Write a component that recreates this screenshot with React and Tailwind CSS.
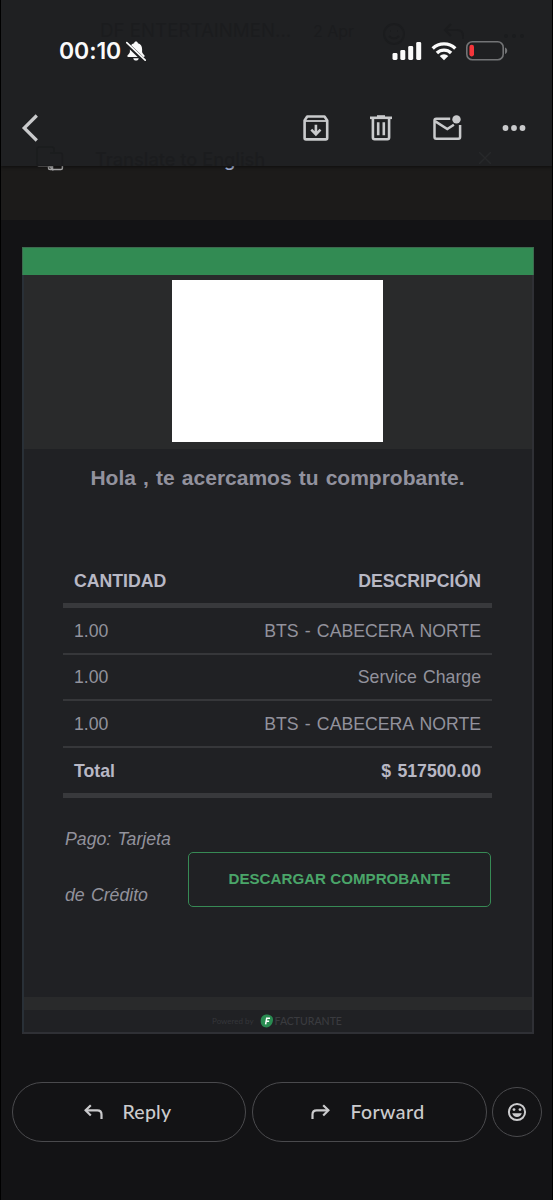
import React from 'react';

const rows = [
  { qty: '1.00', description: 'BTS - CABECERA NORTE' },
  { qty: '1.00', description: 'Service Charge' },
  { qty: '1.00', description: 'BTS - CABECERA NORTE' },
];

const BellOffIcon = () => (
  <svg width="20" height="20" viewBox="0 0 20 20" className="shrink-0">
    <path d="M10 .6c-1 0-1.700.7-1.900 1.600C5.400 3 3.900 5 3.900 8v2.700c0 1.300-1.300 2.300-2.300 3.600-.6.900-.2 1.700.8 1.700h15.200c1 0 1.400-.8.8-1.700-1-1.300-2.300-2.300-2.300-3.600V8c0-3-1.500-5-4.200-5.800C11.700 1.300 11 .6 10 .6z" fill="#fafafa" />
    <path d="M7.200 17.200h5.600c-.3 1.600-1.400 2.400-2.800 2.400s-2.500-.8-2.800-2.400z" fill="#fafafa" />
    <path d="M.2 2.200 18.600 20" stroke="#1f2022" strokeWidth="4" />
    <path d="M.8 1.600 19.200 19.200" stroke="#fafafa" strokeWidth="1.700" strokeLinecap="round" />
  </svg>
);

const SignalIcon = () => (
  <svg width="30" height="18" viewBox="0 0 30 18" fill="#fafafa">
    <rect x="0.500" y="11" width="5" height="7" rx="1.400" />
    <rect x="8.300" y="8" width="5" height="10" rx="1.400" />
    <rect x="16.200" y="4" width="5" height="14" rx="1.400" />
    <rect x="24.200" y="0" width="5" height="18" rx="1.400" />
  </svg>
);

const WifiIcon = () => (
  <svg width="26" height="19" viewBox="0 0 26 19" fill="none" stroke="#fafafa" strokeWidth="3.400">
    <path d="M1.700 6.500a16.200 16.200 0 0 1 22.600 0" />
    <path d="M5.900 11a10.200 10.200 0 0 1 14.200 0" />
    <path d="M13 18.200 8.700 14a6.200 6.200 0 0 1 8.600 0z" fill="#fafafa" stroke="none" />
  </svg>
);

const BatteryIcon = () => (
  <svg width="42" height="20" viewBox="0 0 42 20">
    <rect x="0.800" y="0.800" width="36.400" height="18" rx="5.500" fill="none" stroke="#737476" strokeWidth="1.600" />
    <rect x="3.400" y="3.800" width="4.600" height="11.600" rx="2.100" fill="#f5363b" />
    <path d="M39 6.500c1.400.4 2.200 1.600 2.200 3.200s-.8 2.800-2.200 3.200z" fill="#737476" />
  </svg>
);

const BackIcon = () => (
  <svg width="18" height="28" viewBox="0 0 18 28" fill="none" stroke="#c9cacc" strokeWidth="3.200">
    <path d="M15.800 1.500 3.200 14l12.600 12.500" />
  </svg>
);

const ArchiveIcon = () => (
  <svg width="26" height="26" viewBox="0 0 26 26" fill="none" stroke="#c9cacc" strokeWidth="2.600">
    <path d="M1.600 5.500 4.200 1.500h17.300l2.700 4V23q0 1.400-1.400 1.400H3Q1.600 24.400 1.600 23z" strokeLinejoin="round" />
    <path d="M2 6h22" strokeWidth="1.800" />
    <path d="M12.900 9.800v9M8.300 14.700l4.600 4.600 4.600-4.600" />
  </svg>
);

const TrashIcon = () => (
  <svg width="22" height="26" viewBox="0 0 22 26" fill="none" stroke="#c9cacc" strokeWidth="2.600">
    <path d="M0 2.800h22" />
    <path d="M7 1.200h8" strokeWidth="2" />
    <path d="M2.900 3v19.600q0 1.700 1.700 1.700h12.800q1.700 0 1.700-1.700V3" />
    <path d="M8.200 7.200v13M13.800 7.200v13" />
  </svg>
);

const UnreadIcon = () => (
  <svg width="29" height="26" viewBox="0 0 29 26" fill="none" stroke="#c9cacc" strokeWidth="2.500">
    <path d="M17.200 3.800H3.200Q1.500 3.800 1.500 5.500v16.500q0 1.700 1.700 1.700h22.200q1.700 0 1.700-1.700V10" />
    <path d="m2.300 6.400 12 7.600 6.600-4.200" />
    <circle cx="23.500" cy="4.400" r="4.200" fill="#c9cacc" stroke="none" />
  </svg>
);

const MoreIcon = () => (
  <svg width="24" height="6" viewBox="0 0 24 6" fill="#c9cacc">
    <circle cx="3.500" cy="3" r="2.900" />
    <circle cx="12" cy="3" r="2.900" />
    <circle cx="20.500" cy="3" r="2.900" />
  </svg>
);

const ReplyIcon = ({ flip }) => (
  <svg width="19" height="16" viewBox="0 0 19 16" fill="none" stroke="#cbcbcd" strokeWidth="2.200" className={flip ? '-scale-x-100' : ''}>
    <path d="M6.800 1.200 1.600 6.300l5.200 5.200" />
    <path d="M1.800 6.300h11.500q4.200 0 4.200 4.200V15" />
  </svg>
);

const SmileIcon = () => (
  <svg width="20" height="20" viewBox="0 0 20 20">
    <circle cx="10" cy="10" r="8.100" fill="none" stroke="#cbcbcd" strokeWidth="2" />
    <circle cx="7" cy="7.600" r="1.400" fill="#cbcbcd" />
    <circle cx="13" cy="7.600" r="1.400" fill="#cbcbcd" />
    <path d="M5.200 11.300h9.600c-.7 2.300-2.500 3.700-4.800 3.700s-4.100-1.400-4.800-3.700z" fill="#cbcbcd" />
  </svg>
);

const TranslateIcon = ({ color }) => (
  <svg width="28" height="25" viewBox="0 0 28 25" fill="none" stroke={color} strokeWidth="1.500">
    <path d="M16 19.800H3q-2 0-2-2V3q0-2 2-2h13q2 0 2 2v3" />
    <path d="M12.500 20.500v1.500q0 1.600 1.600 1.600h10.700q1.600 0 1.600-1.600V9q0-2-2-2H14" />
    <path d="m12.800 19.800 3.700 3.600v-3.600z" fill={color} />
  </svg>
);

// mail header that has scrolled under the toolbar, still faintly visible
const ScrolledContent = () => (
  <div className="absolute inset-0 text-[#1b1c1e]" aria-hidden="true">
    <div className="flex h-[60px] items-start pt-[18px] pl-[99px] font-['Inter'] text-[18.700px] leading-[26px]">
      <span className="w-[213px] whitespace-nowrap">DF ENTERTAINMEN...</span>
      <span className="w-[69px] text-[16px]">2 Apr</span>
      <svg width="24" height="24" viewBox="0 0 24 24" fill="none" stroke="currentColor" strokeWidth="2" className="mt-1">
        <circle cx="12" cy="12" r="10" />
        <path d="M8 9h1M15 9h1M7 14q5 5 10 0" />
      </svg>
      <svg width="22" height="18" viewBox="0 0 22 18" fill="none" stroke="currentColor" strokeWidth="2" className="mt-1 ml-[37px]">
        <path d="M8 2 2 8l6 6M2 8h12q6 0 6 6v3" />
      </svg>
      <svg width="22" height="6" viewBox="0 0 22 6" fill="currentColor" className="mt-[15px] ml-[38px]">
        <circle cx="3" cy="3" r="2" />
        <circle cx="11" cy="3" r="2" />
        <circle cx="19" cy="3" r="2" />
      </svg>
    </div>
    <div className="flex h-[106px] items-start justify-between overflow-hidden pt-[86px] pr-[61px] pl-[35px]">
      <div className="flex items-center gap-[31px]">
        <TranslateIcon color="currentColor" />
        <span className="font-['Inter'] text-[18.200px] leading-6 font-medium">Translate to English</span>
      </div>
      <svg width="12" height="12" viewBox="0 0 12 12" stroke="#27282a" strokeWidth="1.500" className="mt-1.5">
        <path d="m0 0 12 12M12 0 0 12" />
      </svg>
    </div>
  </div>
);

const TopBar = () => (
  <header className="absolute inset-x-0 top-0 z-10 h-[166px] bg-[#1f2022] shadow-[0_1px_3px_rgba(0,0,0,0.5)]">
    <ScrolledContent />
    <div className="relative flex h-[102px] items-center pr-[44px] pl-[58px] text-[#fafafa]">
      <span className="w-[67px] font-['Inter'] text-[23px] leading-7 font-semibold tracking-[-0.100px]">00:10</span>
      <BellOffIcon />
      <div className="ml-auto flex items-center">
        <SignalIcon />
        <div className="ml-[9px]"><WifiIcon /></div>
        <div className="ml-[9px]"><BatteryIcon /></div>
      </div>
    </div>
    <div className="relative flex items-center pt-[12px] pr-[26px] pl-[20px]">
      <BackIcon />
      <div className="ml-auto flex items-center">
        <ArchiveIcon />
        <div className="ml-[41px]"><TrashIcon /></div>
        <div className="ml-[41px]"><UnreadIcon /></div>
        <div className="ml-[40px]"><MoreIcon /></div>
      </div>
    </div>
  </header>
);

const Receipt = () => (
  <main className="mt-[27px] ml-[21px] flex h-[787px] w-[512px] flex-col border-b-2 border-[#2f3035] bg-[#202124] font-['Liberation_Sans',Arial,sans-serif] [word-spacing:1.300px]">
    <div className="h-7 shrink-0 border border-[#3c6b4e] border-b-0 bg-[#328b53]" />
    <div className="flex grow flex-col border-x-2 border-r-[#2f3035] border-l-[#293037]">
      <div className="flex h-[174px] justify-center bg-[#292a2b] pt-[5px] pr-[2px]">
        <div className="h-[162px] w-[211px] bg-white" />
      </div>
      <h1 className="h-[106px] pt-[15px] pr-px text-center text-[21px] leading-7 font-bold text-[#92929e]">
        Hola , te acercamos tu comprobante.
      </h1>
      <div className="mr-10 ml-[39px] text-[17.700px] text-[#92929c]">
        <div className="flex h-[53px] items-center justify-between border-b-[5px] border-[#38393c] px-[11px] pt-1 font-bold text-[#b8b8c4]">
          <span>CANTIDAD</span>
          <span>DESCRIPCIÓN</span>
        </div>
        {rows.map((row, i) => (
          <div key={i} className="flex h-[46.700px] items-center justify-between border-b-2 border-[#36373a] px-[11px] pt-px">
            <span>{row.qty}</span>
            <span>{row.description}</span>
          </div>
        ))}
        <div className="flex h-[50px] items-center justify-between border-b-[5px] border-[#38393c] px-[11px] pt-0.5 font-bold text-[#b8b8c4]">
          <span>Total</span>
          <span>$ 517500.00</span>
        </div>
      </div>
      <div className="flex pt-[13px] pr-[41px] pl-[41px]">
        <p className="w-[123px] shrink-0 text-[17.700px] leading-[56.300px] text-[#92929c] italic">
          Pago: Tarjeta<br />de Crédito
        </p>
        <button className="mt-[41px] h-[55px] grow rounded-[5px] border-[1.500px] border-[#378a55] text-[15.150px] font-bold text-[#4aa569]">
          DESCARGAR COMPROBANTE
        </button>
      </div>
      <div className="mt-auto h-[13px] bg-[#292a2b]" />
      <div className="flex h-[22px] items-center justify-center pr-[2px] [word-spacing:0]">
        <span className="font-['Lato'] text-[8px] text-[#35363a]">Powered by</span>
        <svg width="14" height="14" viewBox="0 0 14 14" className="mr-px ml-[6px]">
          <path d="M5 .7C8.500-.3 13 1.200 13 5.600c0 4.400-3 7.800-6.500 7.800C3 13.400.7 10.800.7 7.200.7 3.800 2 1.500 5 .7z" fill="#298b51" />
          <path d="M5.600 10.300 6.700 4.300h3.300M6.200 7.300h2.900" fill="none" stroke="#fff" strokeWidth="1.500" />
        </svg>
        <span className="pt-px font-['Lato'] text-[10.500px] font-medium text-[#3a3b3f]">FACTURANTE</span>
      </div>
    </div>
  </main>
);

const BottomActions = () => (
  <footer className="mt-12 flex items-center gap-[6px] pl-[10.500px] font-['Lato'] text-[19.500px] leading-6 font-medium text-[#cbcbcd]">
    <button className="flex h-[60px] w-[234px] items-center rounded-full border border-[#4a4a4d] pl-[71px]">
      <ReplyIcon />
      <span className="ml-[20px] tracking-[0.200px]">Reply</span>
    </button>
    <button className="flex h-[60px] w-[235px] items-center rounded-full border border-[#4a4a4d] pl-[58px]">
      <ReplyIcon flip />
      <span className="ml-[21px] tracking-[0.400px]">Forward</span>
    </button>
    <button className="-ml-px flex h-[50px] w-[50px] items-center justify-center rounded-full border border-[#4a4a4d]">
      <SmileIcon />
    </button>
  </footer>
);

export default function App() {
  return (
    <div className="relative h-[1200px] w-[553px] overflow-hidden border-x border-black bg-[#131315]">
      <TopBar />
      <div className="h-[220px] bg-[#1c1b1a] pt-[146px] pl-[35px]">
        <div className="flex items-center gap-[31px]">
          <TranslateIcon color="#a9a9aa" />
          <span className="font-['Inter'] text-[18.200px] leading-6 font-medium text-[#a0aed0]">Translate to English</span>
        </div>
      </div>
      <Receipt />
      <BottomActions />
    </div>
  );
}
